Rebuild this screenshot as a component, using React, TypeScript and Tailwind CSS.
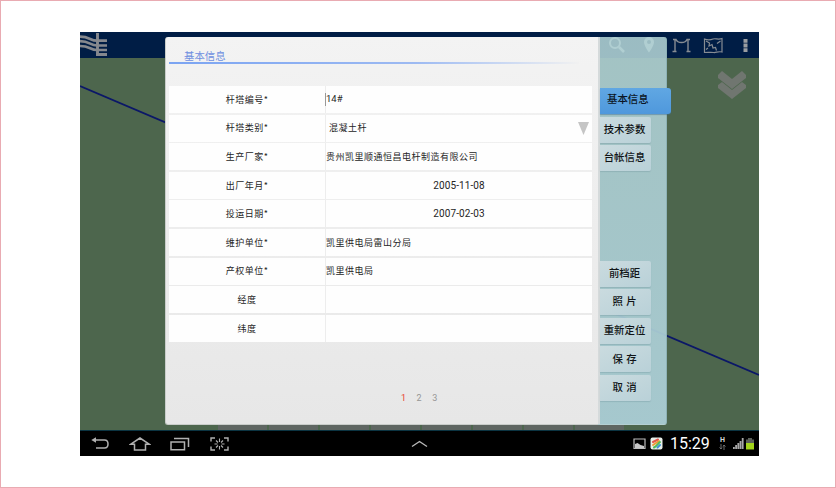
import React from "react";

const rows = [
  { label: "杆塔编号*", value: "14#", kind: "edit" },
  { label: "杆塔类别*", value: "混凝土杆", kind: "select" },
  { label: "生产厂家*", value: "贵州凯里顺通恒昌电杆制造有限公司", kind: "text" },
  { label: "出厂年月*", value: "2005-11-08", kind: "date" },
  { label: "投运日期*", value: "2007-02-03", kind: "date" },
  { label: "维护单位*", value: "凯里供电局雷山分局", kind: "text" },
  { label: "产权单位*", value: "凯里供电局", kind: "text" },
  { label: "经度", value: "", kind: "text" },
  { label: "纬度", value: "", kind: "text" },
];

const tileButton =
  "flex h-[26px] w-[51px] shrink-0 items-center justify-center whitespace-pre rounded-r-[2px] bg-linear-to-br from-[#cadbdf] to-[#b9d1d8] pr-[2px] pb-[1px] text-[10.4px] font-medium leading-none text-[#101416] shadow-[0_1px_1px_rgba(70,110,120,0.2)]";

function Header() {
  return (
    <header className="flex h-[26px] shrink-0 items-start justify-between bg-[#001d45]">
      <svg width="28" height="26" viewBox="0 0 28 26" fill="none" stroke="#85888e">
        <path d="M0 4.700C10 4.700 10 8.700 17 8.700h10M0 9.200c10 0 10 4.300 17 4.300h10M0 14c10 0 10 4 17 4h10" strokeWidth="2.700" />
        <path d="M17.500 1v22.500M16 22.500h11" strokeWidth="2.900" />
      </svg>
      <div className="flex h-[26px] items-center pr-[11px]">
        <svg width="18" height="20" viewBox="0 0 18 20" fill="none" stroke="#d8dde0" strokeWidth="2">
          <circle cx="7" cy="8" r="5" />
          <path d="m11 12 5 5" strokeWidth="2.6" />
        </svg>
        <svg className="ml-[17px]" width="12" height="18" viewBox="0 0 12 18" fill="#d8dde0">
          <path fillRule="evenodd" d="M6 1a5 5 0 0 0-5 5c0 4 5 10.500 5 10.500S11 10 11 6a5 5 0 0 0-5-5Zm0 3a2 2 0 1 1 0 4 2 2 0 0 1 0-4Z" />
        </svg>
        <svg className="ml-[16px]" width="21" height="17" viewBox="0 0 21 17" fill="none" stroke="#868c93" strokeWidth="1.400">
          <path d="M4 2v12.500M17 2v12.500M1.500 14.500h4M15.500 14.500h4M2 2.500h3c1.500 4 9.500 4 11 0h3" />
        </svg>
        <svg className="ml-[11px]" width="21" height="17" viewBox="0 0 21 17" fill="none" stroke="#868c93" strokeWidth="1.200">
          <path d="M1.500 2c4 1.500 6 1 8.500 0s5 1 9-.5v13.500c-4-1-6 1-8.500.5s-5 0-9 0Z" />
          <path d="m3 4 3.500 2-.5 3 3-1.500 1 3.500 2.500-.5 1 3M14 6.500l3.500-2.500M3 12.500l2-1.500" />
        </svg>
        <svg className="ml-[19px]" width="5" height="15" viewBox="0 0 5 15" fill="#9a9da1">
          <path d="M.5 1h4v3.800h-4zM.5 5.600h4v3.800h-4zM.5 10.200h4V14h-4z" />
        </svg>
      </div>
    </header>
  );
}

function MapView() {
  return (
    <div className="relative flex flex-1 flex-col justify-end overflow-hidden bg-[#4d664d]">
      <svg className="absolute inset-0" width="679" height="372" viewBox="0 0 679 372" fill="none">
        <path d="M0 28 679 317" stroke="#0b1768" strokeWidth="1.800" />
        <path d="m638 17 4-4 10 8 10-8 4 4v3l-14 11-14-11ZM638 27l4-3 10 8 10-8 4 3v3l-14 11-14-11Z" fill="#707670" />
      </svg>
      <div className="flex h-[6px] gap-[2px] pl-[138px]">
        {[0, 1, 2, 3, 4, 5, 6, 7].map((n) => (
          <div key={n} className="h-full w-[49px] bg-[#5f6662]" />
        ))}
      </div>
    </div>
  );
}

function SystemBar() {
  return (
    <footer className="flex h-[26px] shrink-0 items-center border-t border-[#0b3442] bg-black text-white">
      <div className="flex w-[154px] items-center justify-between pl-[11px] pr-[5px]">
        <svg width="18" height="13" viewBox="0 0 18 13" fill="none" stroke="#b0b0b0" strokeWidth="1.500">
          <path d="M2 3h11.500q3.500 0 3.500 4t-3.500 4H5" />
          <path d="M5 .3v5.400L.3 3Z" fill="#b0b0b0" stroke="none" />
        </svg>
        <svg width="22" height="14" viewBox="0 0 22 14" fill="none" stroke="#b0b0b0" strokeWidth="1.500">
          <path d="M11 1 1.500 7.300h4V13h11V7.300h4Z" />
        </svg>
        <svg width="20" height="14" viewBox="0 0 20 14" fill="none" stroke="#b0b0b0" strokeWidth="1.500">
          <path d="M1 5h13.500v7.800H1ZM4 1.500h14.500V10" />
        </svg>
        <svg width="19" height="14" viewBox="0 0 19 14" fill="none" stroke="#b0b0b0" strokeWidth="1.400">
          <path d="M1 4.500V1h4M14 1h4v3.500M18 9.500V13h-4M5 13H1V9.500" />
          <path d="M9.500 1.500V5M9.500 9v3.500M4.500 7h3M11.500 7h3M6 3.500l2 2M13 3.500l-2 2M6 10.500l2-2M13 10.500l-2-2" strokeWidth="1.100" />
        </svg>
      </div>
      <svg className="ml-[177px]" width="17" height="8" viewBox="0 0 17 8" fill="none" stroke="#b8b8b8" strokeWidth="1.400">
        <path d="m1 6.500 7.500-5 7.500 5" />
      </svg>
      <div className="ml-auto flex items-center pr-[5px]">
        <svg width="13" height="12" viewBox="0 0 13 12" fill="none">
          <path d="M1 1h11v9.500H1Z" stroke="#bdbdbd" strokeWidth="1.200" />
          <path d="M2 6 4.500 5l3 2L11 8v2H2Z" fill="#c8c8c8" />
        </svg>
        <svg className="ml-[4px]" width="13" height="13" viewBox="0 0 13 13" fill="none" strokeWidth="2" strokeLinecap="round">
          <rect x=".5" y=".5" width="12" height="12" rx="2" fill="#e8efe9" />
          <path d="M3 5 8 2.500" stroke="#e2574d" />
          <path d="m3 8 6-4" stroke="#ee9b32" />
          <path d="M4 10.500C7 9 7.500 7 10 5" stroke="#51b95a" />
          <path d="M7.500 10.500 10 8" stroke="#3f91d7" />
        </svg>
        <span className="ml-[7px] w-[40px] font-['Roboto',sans-serif] text-[16px] leading-none">15:29</span>
        <div className="ml-[9px] flex flex-col items-center">
          <span className="font-['Roboto',sans-serif] text-[7px] font-bold leading-[7px] text-[#d5d5d5]">H</span>
          <svg width="7" height="6" viewBox="0 0 7 6" fill="none" stroke="#777" strokeWidth=".9">
            <path d="M2 0v5M.5 3.500 2 5l1-1.500M5 6V1M4 2.500 5 1l1.500 1.500" />
          </svg>
        </div>
        <svg className="ml-[7px]" width="11" height="11" viewBox="0 0 11 11" fill="#a8a8a8">
          <path d="M0 9h1.800v2H0zM2.200 7H4v4H2.200zM4.400 5h1.800v6H4.400zM6.600 3h1.800v8H6.600zM8.800 0h1.800v11H8.800z" />
        </svg>
        <svg className="ml-[2px]" width="8" height="12" viewBox="0 0 8 12">
          <path d="M2 0h4v1.500h2V5H0V1.500h2Z" fill="#5c605b" />
          <path d="M0 5h8v6.500H0Z" fill="#a4d51b" />
        </svg>
      </div>
    </footer>
  );
}

function FormPanel() {
  return (
    <section className="flex w-[433px] shrink-0 flex-col rounded-l-[3px] border-b border-l border-[#c9cdca] bg-linear-to-b from-[#f3f3f3] to-[#e7e7e7] pl-[3px]">
      <h1 className="h-[25px] shrink-0 pl-[15px] pt-[12px] text-[10.4px] leading-[14px] text-[#6f8fe0]">基本信息</h1>
      <div className="h-[2px] w-[410px] shrink-0 bg-linear-to-r from-[#7ba4f2] via-[#9dbaf2] via-60% to-[#f1f1f1]" />
      <div className="mt-[22px] flex w-[423px] flex-col text-[#252525]">
        {rows.map((row) => (
          <div key={row.label} className="h-[28.600px] pb-[1.600px] text-[9px] tracking-[0.500px]">
            <div className="flex h-[27px] bg-[#fefefe]">
              <div className="flex w-[157px] items-center justify-center border-r border-[#ededed]">
                {row.label}
              </div>
              <div
                className={
                  row.kind === "date"
                    ? "flex flex-1 items-center justify-center text-[10px] tracking-[0.100px]"
                    : row.kind === "select"
                      ? "flex flex-1 items-center justify-between pl-[3px] pr-[3px]"
                      : row.kind === "edit"
                        ? "flex flex-1 items-center text-[9.500px] tracking-normal"
                        : "flex flex-1 items-center"
                }
              >
                {row.kind === "edit" && <span className="-ml-px h-[13px] w-px bg-[#999]" />}
                <span className={row.kind === "date" || row.kind === "edit" ? "font-['Roboto',sans-serif]" : ""}>
                  {row.value}
                </span>
                {row.kind === "select" && (
                  <svg width="11" height="13" viewBox="0 0 11 13" fill="#c5c5c5">
                    <path d="M0 0h11L5.500 13Z" />
                  </svg>
                )}
              </div>
            </div>
          </div>
        ))}
      </div>
      <div className="mt-[50px] flex gap-[10.500px] pl-[232px] font-['Roboto',sans-serif] text-[9px] leading-[11px] text-[#969696]">
        <span className="text-[#e8402f]">1</span>
        <span>2</span>
        <span>3</span>
      </div>
    </section>
  );
}

function SideTabs() {
  return (
    <aside className="flex w-[69px] flex-col rounded-r-[3px] border-b border-r border-[#b4cfd2] border-r-[#8eb2b6] bg-linear-to-b from-[#accdd0e6] to-[#abced6f0] pl-[2px] pt-[51px] shadow-[inset_2px_0_0_#d5dadb]">
      <button className="flex h-[26px] w-[71px] shrink-0 items-center rounded-r-[3px] bg-linear-to-b from-[#60a7e3] to-[#4f98dc] pb-[3px] pl-[7px] text-[10.400px] font-medium leading-none text-[#0b1524] shadow-[0_1px_1px_rgba(60,110,150,0.5)]">
        基本信息
      </button>
      <div className="mt-[2.500px] flex flex-col gap-[2.600px]">
        <button className={tileButton}>技术参数</button>
        <button className={tileButton}>台帐信息</button>
      </div>
      <div className="mt-[89.500px] flex flex-col gap-[2.600px]">
        <button className={tileButton}>前档距</button>
        <button className={tileButton + " [word-spacing:1px]"}>照 片</button>
        <button className={tileButton}>重新定位</button>
        <button className={tileButton + " [word-spacing:1px]"}>保 存</button>
        <button className={tileButton + " [word-spacing:1px]"}>取 消</button>
      </div>
    </aside>
  );
}

export default function App() {
  return (
    <div className="h-[488px] w-[836px] border border-[#e9abb2] bg-white pl-[79px] pt-[31px] font-['Noto_Sans_CJK_SC',sans-serif]">
      <main className="relative flex h-[424px] w-[679px] flex-col">
        <Header />
        <MapView />
        <SystemBar />
        <div className="absolute left-[85px] top-[5px] flex h-[388px] w-[502px]">
          <FormPanel />
          <SideTabs />
        </div>
      </main>
    </div>
  );
}
